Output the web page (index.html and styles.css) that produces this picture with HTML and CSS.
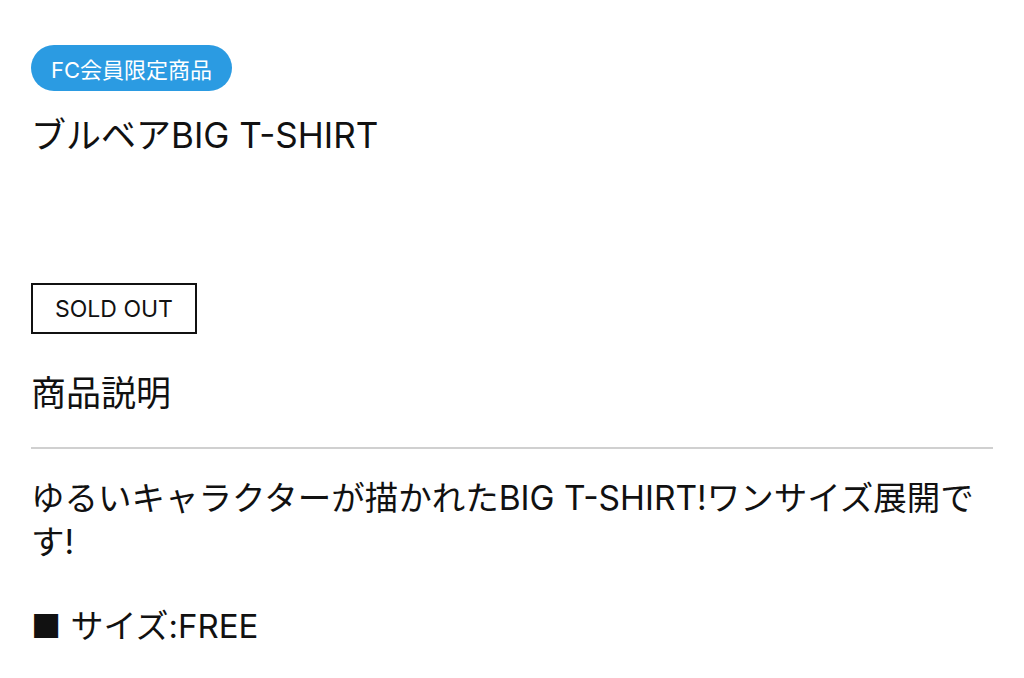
FILE: index.html
```html
<!DOCTYPE html>
<html lang="ja">
<head>
<meta charset="utf-8">
<link rel="stylesheet" href="styles.css">
</head>
<body>
<main class="page">
  <span class="badge">FC会員限定商品</span>
  <h1 class="title">ブルベアBIG T-SHIRT</h1>
  <div class="status"><span class="soldout">SOLD OUT</span></div>
  <h2 class="section-title">商品説明</h2>
  <hr class="divider">
  <p class="desc">ゆるいキャラクターが描かれたBIG T-SHIRT!ワンサイズ展開です!</p>
  <p class="spec">■ サイズ:FREE</p>
</main>
</body>
</html>
```

FILE: styles.css
```css
html, body {
  margin: 0;
  padding: 0;
  background: #fff;
}
body {
  font-family: Inter, "Noto Sans CJK JP", sans-serif;
  color: #111;
}
.page {
  padding: 45px 31px 0;
  display: flex;
  flex-direction: column;
  align-items: flex-start;
}
.badge {
  display: inline-flex;
  align-items: center;
  height: 46px;
  padding: 0 20px;
  background: #2b9be2;
  color: #fff;
  font-size: 22px;
  border-radius: 23px;
}
.title {
  margin: 21px 0 0;
  font-size: 35px;
  font-weight: 400;
  line-height: 46px;
}
.status {
  margin-top: 125px;
}
.soldout {
  display: inline-flex;
  align-items: center;
  box-sizing: border-box;
  height: 51px;
  padding: 0 22px;
  border: 2px solid #111;
  font-size: 23px;
}
.section-title {
  margin: 36px 0 0;
  font-size: 35px;
  font-weight: 400;
  line-height: 46px;
}
.divider {
  align-self: stretch;
  margin: 31px 0 0;
  border: 0;
  border-top: 2px solid #d0d0d0;
  height: 0;
}
.desc {
  margin: 27px 0 0;
  font-size: 33.5px;
  line-height: 44px;
}
.spec {
  margin: 40px 0 0;
  font-size: 33px;
  line-height: 44px;
}
```
